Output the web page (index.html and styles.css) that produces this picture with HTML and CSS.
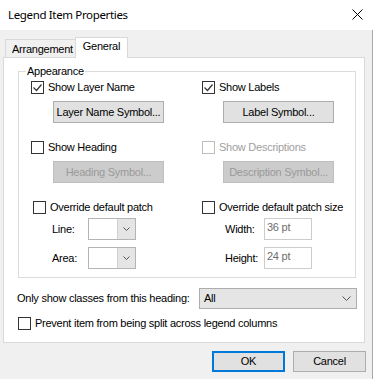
FILE: index.html
```html
<!DOCTYPE html>
<html>
<head>
<meta charset="utf-8">
<title>Legend Item Properties</title>
<link rel="stylesheet" href="styles.css">
</head>
<body>
<div class="window">
  <header class="titlebar">
    <span class="title">Legend Item Properties</span>
    <svg class="close" width="11" height="11" viewBox="0 0 11 11"><path d="M0.5 0.5L10.5 10.5M10.5 0.5L0.5 10.5" stroke="#000" stroke-width="1" fill="none"/></svg>
  </header>
  <div class="client">
    <div class="tabs">
      <div class="tab">Arrangement</div>
      <div class="tab active">General</div>
    </div>
    <div class="panel">
      <div class="group">
        <span class="group-title">Appearance</span>
        <div class="grid">
          <label class="check"><span class="cb"><svg width="11" height="11" viewBox="0 0 11 11"><polyline points="1.5,5.5 4.5,8.5 9.5,2.5" fill="none" stroke="#333" stroke-width="1.2"/></svg></span>Show Layer Name</label>
          <label class="check"><span class="cb"><svg width="11" height="11" viewBox="0 0 11 11"><polyline points="1.5,5.5 4.5,8.5 9.5,2.5" fill="none" stroke="#333" stroke-width="1.2"/></svg></span>Show Labels</label>

          <button class="btn sym sym1">Layer Name Symbol...</button>
          <button class="btn sym sym2">Label Symbol...</button>

          <label class="check row-gap"><span class="cb"></span>Show Heading</label>
          <label class="check row-gap disabled"><span class="cb"></span>Show Descriptions</label>

          <button class="btn sym sym1" disabled>Heading Symbol...</button>
          <button class="btn sym sym2" disabled>Description Symbol...</button>

          <label class="check row-gap indent"><span class="cb"></span>Override default patch</label>
          <label class="check row-gap"><span class="cb"></span>Override default patch size</label>

          <div class="fields fields1">
            <span class="flabel">Line:</span>
            <div class="combo"><span class="combo-field"></span><span class="combo-drop"><svg width="7" height="4" viewBox="0 0 7 4"><path d="M0.5 0.5L3.5 3.5L6.5 0.5" fill="none" stroke="#555" stroke-width="1"/></svg></span></div>
            <span class="flabel">Area:</span>
            <div class="combo"><span class="combo-field"></span><span class="combo-drop"><svg width="7" height="4" viewBox="0 0 7 4"><path d="M0.5 0.5L3.5 3.5L6.5 0.5" fill="none" stroke="#555" stroke-width="1"/></svg></span></div>
          </div>
          <div class="fields fields2">
            <span class="flabel">Width:</span>
            <div class="textbox">36 pt</div>
            <span class="flabel">Height:</span>
            <div class="textbox">24 pt</div>
          </div>
        </div>
      </div>

      <div class="heading-row">
        <span>Only show classes from this heading:</span>
        <div class="select"><span>All</span><svg width="9" height="5" viewBox="0 0 9 5"><path d="M0.5 0.5L4.5 4.5L8.5 0.5" fill="none" stroke="#555" stroke-width="1"/></svg></div>
      </div>

      <label class="check prevent"><span class="cb"></span>Prevent item from being split across legend columns</label>
    </div>
    <div class="actions">
      <button class="btn action ok">OK</button>
      <button class="btn action">Cancel</button>
    </div>
  </div>
</div>
</body>
</html>
```

FILE: styles.css
```css
* { box-sizing: border-box; }

html, body {
  margin: 0;
  padding: 0;
  background: #f0f0f0;
}

body {
  font-family: "Liberation Sans", Arial, sans-serif;
  font-size: 11px;
  line-height: 13px;
  letter-spacing: -0.25px;
  color: #000;
}

.window {
  width: 374px;
  height: 379px;
  display: flex;
  flex-direction: column;
  background: #fff;
}

.titlebar {
  height: 30px;
  flex: none;
  display: flex;
  align-items: center;
  justify-content: space-between;
  padding: 0 11px 1px 8px;
  background: #fff;
}

.title {
  font-family: "Noto Sans", "Open Sans", sans-serif;
  font-size: 11.5px;
  letter-spacing: -0.35px;
  line-height: 16px;
}

.close { display: block; }

.client {
  flex: 1;
  width: 373px;
  background: #f0f0f0;
  border-right: 1px solid #a9a9a9;
  padding: 7px 0 0 3px;
}

.tabs {
  display: flex;
  align-items: flex-end;
  padding-left: 2px;
  height: 20px;
}

.tab {
  border: 1px solid #d9d9d9;
  border-bottom: none;
  background: #f0f0f0;
  height: 18px;
  width: 71px;
  padding: 3px 0 1px 6px;
  white-space: nowrap;
}

.tab.active {
  position: relative;
  z-index: 1;
  background: #fff;
  height: 21px;
  width: 53px;
  margin-left: -1px;
  margin-bottom: -1px;
  padding: 2px 0 0 0;
  text-align: center;
}

.panel {
  width: 362px;
  height: 286px;
  background: #fff;
  border: 1px solid #d9d9d9;
}

.group {
  position: relative;
  margin: 13px 0 0 14px;
  width: 338px;
  border: 1px solid #dcdcdc;
  padding: 9px 0 8px 12px;
}

.group-title {
  position: absolute;
  top: -7px;
  left: 7px;
  padding: 0 1px;
  background: #fff;
}

.grid {
  display: grid;
  grid-template-columns: 171px 1fr;
  align-items: start;
}

.check {
  display: flex;
  align-items: center;
  gap: 4px;
  height: 13px;
  white-space: nowrap;
}

.cb {
  flex: none;
  width: 13px;
  height: 13px;
  border: 1px solid #333;
  background: #fff;
  display: block;
}

.cb svg { display: block; }

.check.disabled { color: #a0a0a0; }
.check.disabled .cb { border-color: #bcbcbc; }

.row-gap { margin-top: 18px; }
.indent { margin-left: 2px; }

.btn {
  font: inherit;
  letter-spacing: inherit;
  color: #000;
  background: #e1e1e1;
  border: 1px solid #adadad;
  padding: 0;
  margin: 0;
  display: flex;
  align-items: center;
  justify-content: center;
}

.btn:disabled {
  background: #cccccc;
  border-color: #bfbfbf;
  color: #9a9a9a;
}

.sym {
  width: 111px;
  height: 22px;
  margin-top: 7px;
}

.sym1 { margin-left: 22px; }
.sym2 { margin-left: 21px; }

.fields {
  display: grid;
  row-gap: 7px;
  margin-top: 4px;
  align-items: center;
}

.fields1 {
  grid-template-columns: 36px 48px;
  margin-left: 21px;
}

.fields2 {
  grid-template-columns: 39px 48px;
  margin-left: 23px;
}

.combo {
  display: flex;
  width: 48px;
  height: 22px;
  border: 1px solid #b4b4b4;
  background: #fff;
}

.combo-field { flex: 1; }

.combo-drop {
  width: 18px;
  background: #e5e5e5;
  border-left: 1px solid #d0d0d0;
  display: flex;
  align-items: center;
  justify-content: center;
}

.combo-drop svg { display: block; }

.textbox {
  width: 48px;
  height: 22px;
  border: 1px solid #cccccc;
  background: #fff;
  color: #6d6d6d;
  padding: 2px 0 0 2px;
}

.heading-row {
  display: flex;
  align-items: center;
  justify-content: space-between;
  margin-top: 10px;
  padding: 0 7px 0 13px;
}

.select {
  width: 158px;
  height: 21px;
  background: #e5e5e5;
  border: 1px solid #adadad;
  display: flex;
  align-items: center;
  justify-content: space-between;
  padding: 0 5px 0 4px;
}

.select svg { display: block; }

.prevent {
  margin: 8px 0 0 14px;
}

.actions {
  display: flex;
  justify-content: flex-end;
  gap: 8px;
  margin-top: 8px;
  padding-right: 6px;
}

.action {
  width: 73px;
  height: 21px;
}

.ok {
  border: 2px solid #0078d7;
}
```
